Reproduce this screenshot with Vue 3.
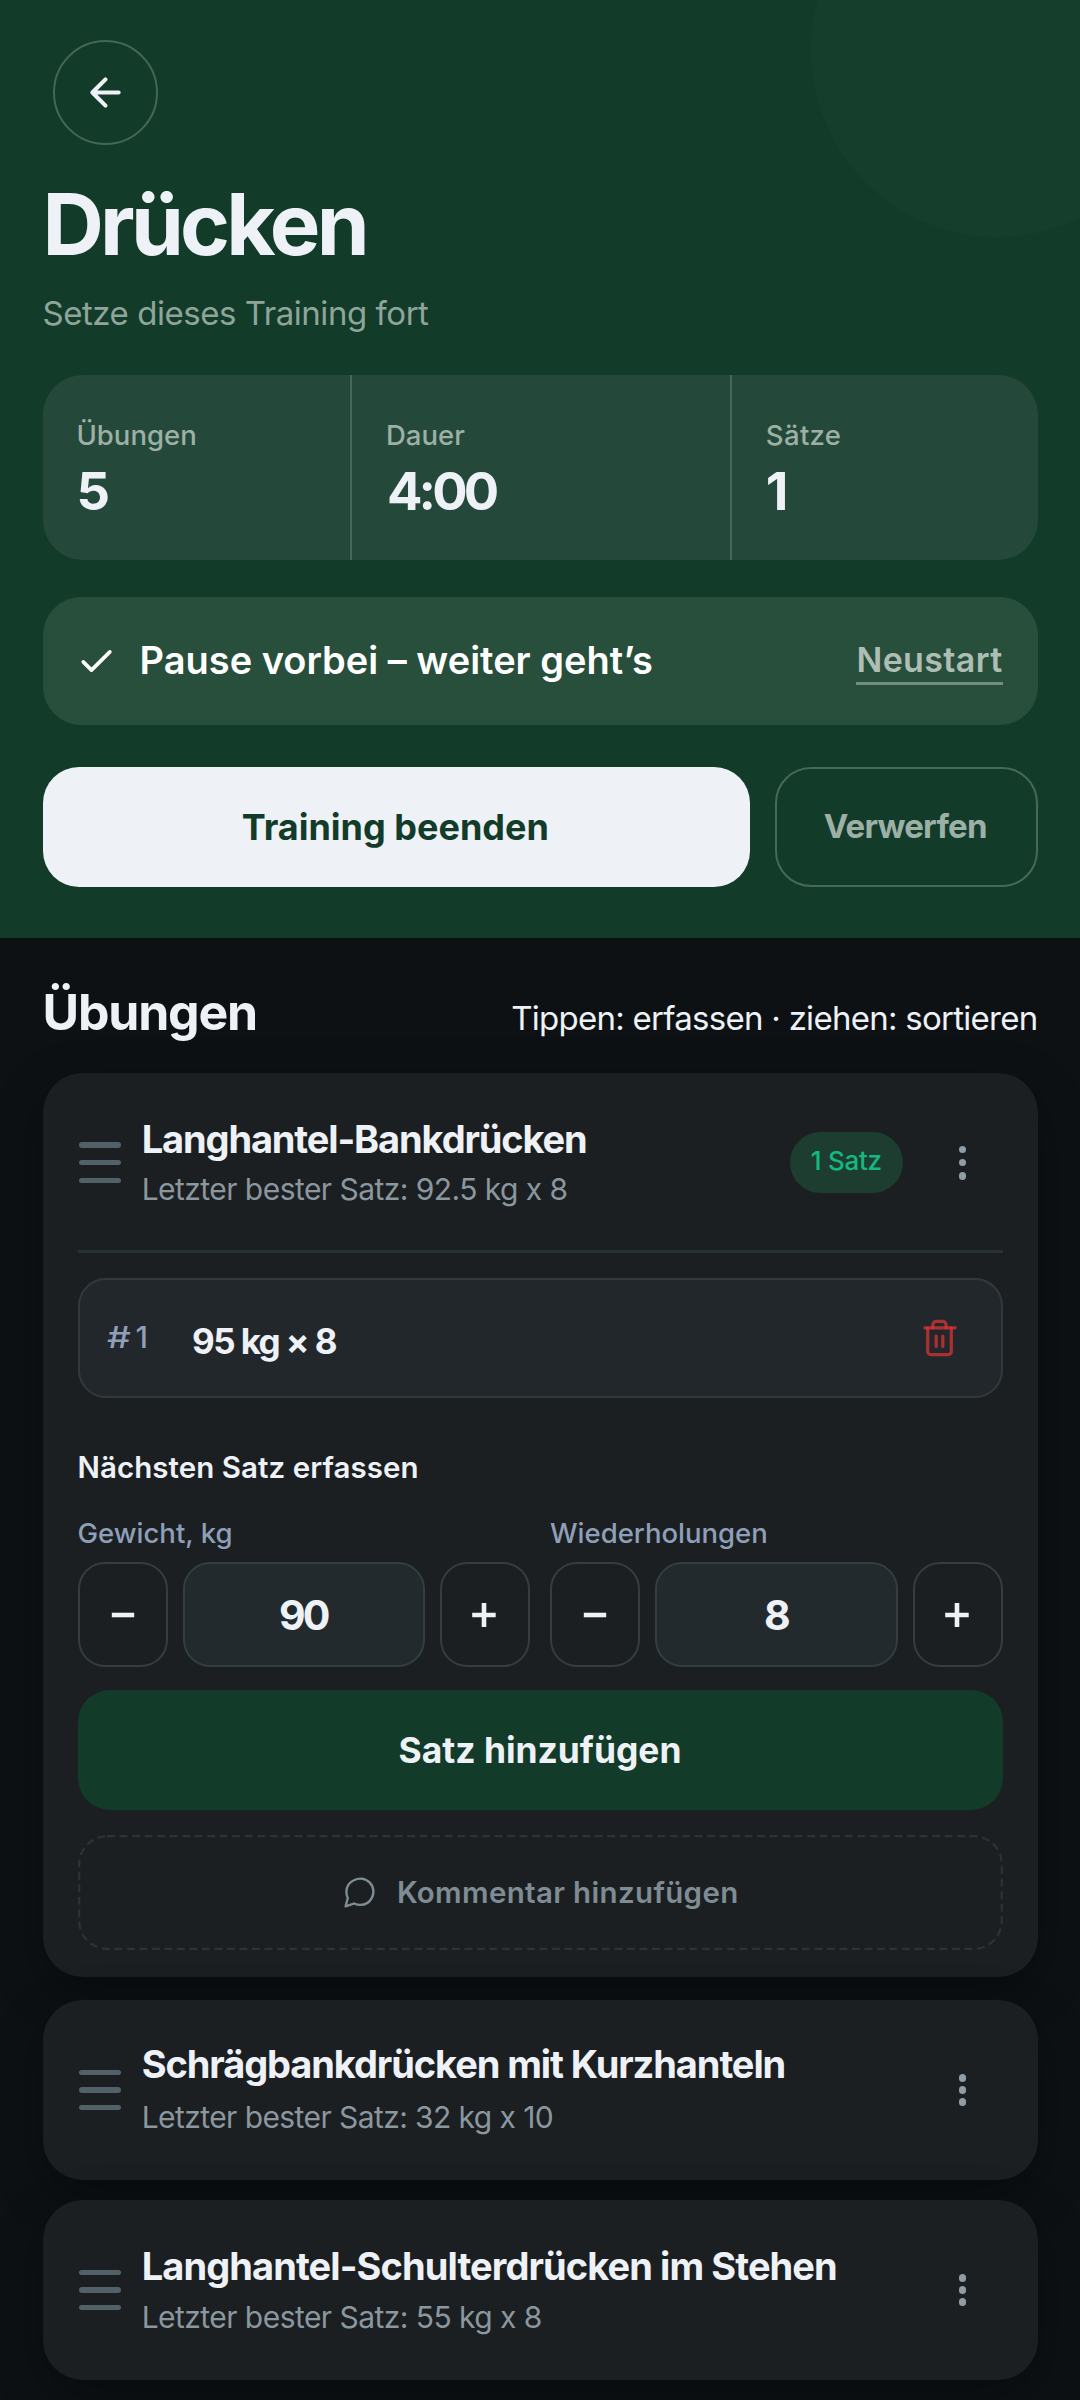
<script setup>
const stats = [
  { label: 'Übungen', value: '5', key: 'exercises' },
  { label: 'Dauer', value: '4:00', key: 'duration' },
  { label: 'Sätze', value: '1', key: 'sets' },
]
const steppers = [
  { label: 'Gewicht, kg', value: 90, key: 'weight' },
  { label: 'Wiederholungen', value: 8, key: 'reps' },
]
const others = [
  { name: 'Schrägbankdrücken mit Kurzhanteln', best: 'Letzter bester Satz: 32 kg x 10', key: 'incline' },
  { name: 'Langhantel-Schulterdrücken im Stehen', best: 'Letzter bester Satz: 55 kg x 8', key: 'overhead' },
]
</script>

<template>
  <div class="screen">
    <header class="hero">
      <div class="orb"></div>
      <button class="back" aria-label="Zurück">
        <svg width="45" height="45" viewBox="0 0 24 24" fill="none" stroke="currentColor" stroke-width="2.2" stroke-linecap="round" stroke-linejoin="round"><path d="M12 5l-7 7 7 7M5 12h14" /></svg>
      </button>
      <h1 class="title">Drücken</h1>
      <p class="subtitle">Setze dieses Training fort</p>

      <div class="stats">
        <div v-for="s in stats" :key="s.key" class="stat" :class="s.key">
          <span class="stat-label">{{ s.label }}</span>
          <span class="stat-value">{{ s.value }}</span>
        </div>
      </div>

      <div class="rest">
        <svg class="check" width="44" height="44" viewBox="0 0 24 24" fill="none" stroke="currentColor" stroke-width="2" stroke-linecap="round" stroke-linejoin="round"><path d="M19 7L9 17l-4.5-4.5" /></svg>
        <span class="rest-text">Pause vorbei – weiter geht’s</span>
        <a class="restart">Neustart</a>
      </div>

      <div class="actions">
        <button class="finish">Training beenden</button>
        <button class="discard">Verwerfen</button>
      </div>
    </header>

    <div class="section-head">
      <h2>Übungen</h2>
      <span class="hint">Tippen: erfassen · ziehen: sortieren</span>
    </div>

    <main class="list">
      <section class="card open">
        <div class="row">
          <span class="grip"><i></i><i></i><i></i></span>
          <div class="names">
            <h3>Langhantel-Bankdrücken</h3>
            <p>Letzter bester Satz: 92.5 kg x 8</p>
          </div>
          <span class="badge">1 Satz</span>
          <span class="more"><i></i><i></i><i></i></span>
        </div>
        <div class="divider"></div>
        <div class="set">
          <span class="set-no"><span class="hash">#</span>1</span>
          <span class="set-value">95 kg × 8</span>
          <svg class="trash" width="42" height="42" viewBox="0 0 42 42" fill="none" stroke="rgba(222,52,52,0.73)" stroke-width="3.2" stroke-linecap="round" stroke-linejoin="round">
            <path d="M5.8 10.8H36.2" />
            <path d="M13.8 10.8V7.9A3.5 3.5 0 0 1 17.3 4.4h6.3a3.5 3.5 0 0 1 3.5 3.5v2.9" />
            <path d="M8.7 10.8V34.6a3 3 0 0 0 3 3h17.6a3 3 0 0 0 3-3V10.8" />
            <path d="M17.2 19v10.4" />
            <path d="M23.8 19v10.4" />
          </svg>
        </div>
        <p class="next">Nächsten Satz erfassen</p>
        <div class="fields">
          <div v-for="f in steppers" :key="f.key" class="field">
            <label>{{ f.label }}</label>
            <div class="stepper">
              <button class="step" aria-label="Weniger"><svg width="26" height="26" viewBox="0 0 26 26" stroke="currentColor" stroke-width="4.6"><path d="M1.8 13h22.4" /></svg></button>
              <div class="value">{{ f.value }}</div>
              <button class="step" aria-label="Mehr"><svg width="26" height="26" viewBox="0 0 26 26" stroke="currentColor" stroke-width="4.6"><path d="M0.2 13h23.5M12 1v24" /></svg></button>
            </div>
          </div>
        </div>
        <button class="add">Satz hinzufügen</button>
        <button class="comment">
          <svg class="dash" width="925" height="115"><rect x="1.2" y="1.2" width="922.6" height="112.6" rx="28" fill="none" stroke="#2a3337" stroke-width="2.2" stroke-dasharray="7.9 4.6" /></svg>
          <svg width="37" height="37" viewBox="0 0 24 24" fill="none" stroke="currentColor" stroke-width="1.55" stroke-linecap="round" stroke-linejoin="round"><path d="M21 11.5a8.38 8.38 0 0 1-.9 3.8 8.5 8.5 0 0 1-7.6 4.7 8.38 8.38 0 0 1-3.8-.9L3 21l1.4-5.4a8.38 8.38 0 0 1-.9-4.1 8.5 8.5 0 0 1 5.2-7.6 8.38 8.38 0 0 1 3.8-.9h.5a8.48 8.48 0 0 1 8 8v.5z" /></svg>
          <span>Kommentar hinzufügen</span>
        </button>
      </section>

      <section v-for="e in others" :key="e.key" class="card compact" :class="e.key">
        <div class="row">
          <span class="grip"><i></i><i></i><i></i></span>
          <div class="names">
            <h3>{{ e.name }}</h3>
            <p>{{ e.best }}</p>
          </div>
          <span class="more"><i></i><i></i><i></i></span>
        </div>
      </section>
    </main>
  </div>
</template>

<style>
body {
  background: #0d1114;
}
</style>

<style scoped>
.screen {
  width: 1080px;
  height: 2400px;
  overflow: hidden;
  background: #0d1114;
  color: #eef1f5;
  font-family: Inter, 'Noto Sans', sans-serif;
}
h1, h2, h3, p { margin: 0; }
button {
  margin: 0;
  padding: 0;
  border: 0;
  background: none;
  color: inherit;
  font-family: inherit;
}
h1, h2, h3, p, span, a, label, button { white-space: nowrap; }

.hero {
  position: relative;
  display: flex;
  flex-direction: column;
  box-sizing: border-box;
  height: 937.5px;
  padding: 40px 42.5px 0;
  overflow: hidden;
  background: #123b2a;
}
.orb {
  position: absolute;
  left: 811px;
  top: -136px;
  width: 373px;
  height: 373px;
  border-radius: 50%;
  background: rgba(255, 255, 220, 0.018);
}
.back {
  display: flex;
  align-items: center;
  justify-content: center;
  box-sizing: border-box;
  width: 105px;
  height: 105px;
  margin-left: 10px;
  border: 2px solid rgba(255, 255, 255, 0.22);
  border-radius: 50%;
}
.title {
  margin-top: 30px;
  font-size: 85px;
  line-height: 100px;
  font-weight: 700;
  letter-spacing: -3.8px;
}
.subtitle {
  margin-top: 16px;
  font-size: 33px;
  line-height: 44px;
  letter-spacing: -0.46px;
  color: #8fa599;
}
.stats {
  display: grid;
  grid-template-columns: 309.5px 379.8px 1fr;
  height: 185px;
  margin-top: 40px;
  border-radius: 40px;
  background: #24493a;
}
.stat {
  display: flex;
  flex-direction: column;
  padding: 42px 34px 0;
}
.stat:not(:last-child) { border-right: 2px solid #44695a; }
.stat-label {
  font-size: 27.5px;
  line-height: 36px;
  font-weight: 500;
  color: #9db0a5;
}
.sets .stat-label { letter-spacing: 0.35px; }
.stat-value {
  margin-top: 8px;
  font-size: 52.5px;
  line-height: 60px;
  font-weight: 700;
}
.duration .stat-value {
  padding-left: 1px;
  letter-spacing: -3.9px;
}
.rest {
  display: flex;
  align-items: center;
  box-sizing: border-box;
  height: 128px;
  margin-top: 37px;
  padding: 0 34px 0 31px;
  border: 1px solid #284e3c;
  border-radius: 38px;
  background: #284e3c;
}
.check { color: #fff; }
.rest-text {
  flex: 1;
  margin-left: 21px;
  padding-bottom: 3px;
  font-size: 38px;
  font-weight: 600;
  color: #fff;
}
.restart {
  margin-top: 1px;
  border-bottom: 3px solid #738e80;
  font-size: 34px;
  line-height: 44px;
  font-weight: 600;
  letter-spacing: 0.35px;
  color: #aebeb5;
}
.actions {
  display: flex;
  gap: 25px;
  height: 120px;
  margin-top: 42.4px;
}
.finish {
  flex: 1;
  padding-right: 2px;
  border-radius: 36px;
  background: #eef1f5;
  font-size: 36px;
  font-weight: 700;
  color: #123b2a;
}
.discard {
  box-sizing: border-box;
  width: 262.5px;
  padding: 0 2px 2px 0;
  border: 2px solid #486858;
  border-radius: 36px;
  font-size: 33px;
  font-weight: 700;
  letter-spacing: -0.78px;
  color: #9db0a5;
}
.section-head {
  display: flex;
  align-items: baseline;
  justify-content: space-between;
  height: 60px;
  padding: 44.8px 42.5px 30.4px;
}
h2 {
  font-size: 50px;
  line-height: 60px;
  font-weight: 700;
  letter-spacing: -1.2px;
}
.hint {
  font-size: 33px;
  line-height: 44px;
  letter-spacing: -0.73px;
}
.list { padding: 0 42.5px; }
.card {
  box-sizing: border-box;
  padding: 0 35px;
  border-radius: 40px;
  background: #1b1f22;
  box-shadow: 0 16px 50px rgba(0, 0, 0, 0.3);
}
.open { height: 904.3px; }
.compact {
  height: 180px;
  margin-top: 23px;
}
.compact + .compact { margin-top: 20px; }
.row {
  display: flex;
  align-items: center;
  height: 180px;
}
.open .row {
  box-sizing: border-box;
  height: 177.3px;
  padding-top: 2.6px;
}
.grip {
  display: flex;
  flex-direction: column;
  gap: 12.4px;
  width: 42.5px;
  margin-left: 1.4px;
}
.grip i {
  height: 5.2px;
  border-radius: 3px;
  background: #526067;
}
.names {
  flex: 1;
  margin-left: 20.3px;
  padding-bottom: 2.2px;
}
h3 {
  font-size: 38px;
  line-height: 50px;
  font-weight: 650;
  letter-spacing: -1.13px;
}
.names p {
  margin-top: 4.8px;
  font-size: 30px;
  line-height: 40px;
  letter-spacing: -0.55px;
  color: #8b979e;
}
.incline .names { padding-bottom: 4.3px; }
.incline h3 { letter-spacing: -1.09px; }
.incline .names p {
  margin-top: 8px;
  letter-spacing: -0.58px;
}
.overhead .names { padding-bottom: 2px; }
.overhead h3 { letter-spacing: -0.91px; }
.overhead .names p { margin-top: 6px; }
.badge {
  width: 112.4px;
  height: 60.5px;
  border-radius: 31px;
  background: #1e3d31;
  font-size: 26px;
  line-height: 58px;
  font-weight: 500;
  letter-spacing: -0.3px;
  text-align: center;
  color: #14b880;
}
.more {
  display: flex;
  flex-direction: column;
  align-items: center;
  gap: 5.4px;
  width: 80px;
  margin-left: 20px;
}
.compact .more { gap: 4.5px; }
.more i {
  width: 7.7px;
  height: 7.7px;
  border-radius: 50%;
  background: #909da4;
}
.divider {
  height: 2.6px;
  background: #273033;
}
.set {
  display: flex;
  align-items: center;
  box-sizing: border-box;
  height: 120px;
  margin-top: 25px;
  padding: 0 40px 0 27.8px;
  border: 2px solid #32393c;
  border-radius: 28px;
  background: #22272b;
}
.set-no {
  display: flex;
  align-items: baseline;
  gap: 4.5px;
  width: 84.8px;
  padding-bottom: 2px;
  font-size: 30px;
  font-weight: 500;
  color: #8f9fb8;
}
.hash {
  display: inline-block;
  transform: scaleX(1.25);
  transform-origin: left;
  margin-right: 4.5px;
}
.set-value {
  flex: 1;
  padding-top: 6px;
  font-size: 35px;
  font-weight: 650;
  letter-spacing: -1.6px;
  word-spacing: 0;
}
.next {
  margin-top: 49px;
  font-size: 29.5px;
  line-height: 40px;
  font-weight: 600;
  letter-spacing: 0.05px;
}
.fields {
  display: grid;
  grid-template-columns: 1fr 1fr;
  gap: 20px;
  margin-top: 28px;
}
.field label {
  display: block;
  font-size: 27.5px;
  line-height: 36px;
  font-weight: 500;
  color: #8f9fb8;
}
.stepper {
  display: grid;
  grid-template-columns: 90px 1fr 90px;
  gap: 15px;
  height: 105px;
  margin-top: 11.6px;
}
.step,
.value {
  display: flex;
  align-items: center;
  justify-content: center;
  box-sizing: border-box;
  border: 2px solid #343d42;
  border-radius: 27px;
}
.value {
  padding-right: 1px;
  background: #222a2d;
  font-size: 41px;
  font-weight: 700;
  letter-spacing: -3px;
}
.add {
  display: block;
  width: 100%;
  height: 120px;
  margin-top: 22.6px;
  padding-top: 2px;
  border-radius: 32px;
  background: #123b2a;
  font-size: 35.4px;
  font-weight: 700;
}
.comment {
  position: relative;
  display: flex;
  align-items: center;
  justify-content: center;
  gap: 18.5px;
  width: 100%;
  height: 115px;
  margin-top: 25px;
  font-size: 29.5px;
  font-weight: 600;
  letter-spacing: 0.34px;
  color: #7f8c93;
}
.dash {
  position: absolute;
  left: 0;
  top: 0;
}
</style>
